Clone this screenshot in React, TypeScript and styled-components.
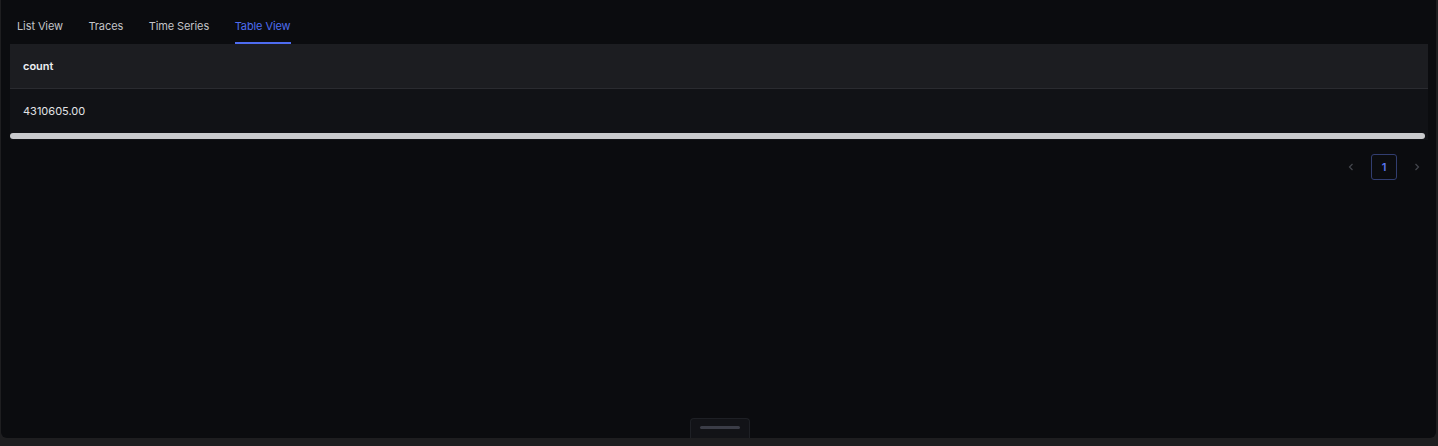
import React, { useState } from "react";
import styled, { createGlobalStyle } from "styled-components";

const GlobalStyle = createGlobalStyle`
  html, body {
    margin: 0;
    padding: 0;
    background: #1e1e20;
    font-family: Inter, "Noto Sans", "Liberation Sans", sans-serif;
  }
`;

const TABS = ["List View", "Traces", "Time Series", "Table View"];

const App = () => {
  const [active, setActive] = useState("Table View");

  return (
    <>
      <GlobalStyle />
      <Frame>
        <TabBar>
          {TABS.map((tab) => (
            <Tab
              key={tab}
              $active={tab === active}
              onClick={() => setActive(tab)}
            >
              {tab}
            </Tab>
          ))}
        </TabBar>
        <TableWrap>
          <Table>
            <thead>
              <tr>
                <HeadCell>count</HeadCell>
              </tr>
            </thead>
            <tbody>
              <tr>
                <BodyCell>4310605.00</BodyCell>
              </tr>
            </tbody>
          </Table>
          <ScrollTrack>
            <ScrollThumb />
          </ScrollTrack>
        </TableWrap>
        <Pagination>
          <PageArrow aria-label="previous">
            <svg width="10" height="10" viewBox="0 0 10 10">
              <path d="M6.5 2 L3.5 5 L6.5 8" fill="none" stroke="currentColor" strokeWidth="1.2" />
            </svg>
          </PageArrow>
          <PageItem $active>1</PageItem>
          <PageArrow aria-label="next">
            <svg width="10" height="10" viewBox="0 0 10 10">
              <path d="M3.5 2 L6.5 5 L3.5 8" fill="none" stroke="currentColor" strokeWidth="1.2" />
            </svg>
          </PageArrow>
        </Pagination>
        <Spacer />
        <HandleRow>
          <DragHandle>
            <HandleLine />
          </DragHandle>
        </HandleRow>
      </Frame>
    </>
  );
};

export default App;

const Frame = styled.div`
  box-sizing: border-box;
  margin-left: 1px;
  width: 1435px;
  height: 438px;
  background: #0b0c0f;
  border-radius: 0 0 6px 6px;
  display: flex;
  flex-direction: column;
  overflow: hidden;
`;

const TabBar = styled.div`
  display: flex;
  gap: 25.5px;
  padding: 0 16px;
  height: 44px;
  align-items: stretch;
`;

const Tab = styled.div<{ $active?: boolean }>`
  display: flex;
  align-items: center;
  padding-top: 10px;
  font-size: 11px;
  letter-spacing: -0.1px;
  color: ${(p) => (p.$active ? "#4e6cf0" : "#c3c4c8")};
  border-bottom: 2px solid ${(p) => (p.$active ? "#4e6cf0" : "transparent")};
  box-sizing: border-box;
  cursor: pointer;
`;

const TableWrap = styled.div`
  margin: 0 8px 0 9px;
  display: flex;
  flex-direction: column;
`;

const Table = styled.table`
  width: 100%;
  border-collapse: collapse;
`;

const HeadCell = styled.th`
  height: 44px;
  padding: 0 13px;
  text-align: left;
  font-size: 11px;
  font-weight: 600;
  color: #eceef2;
  background: #1c1d21;
  border-bottom: 1px solid #2a2b30;
`;

const BodyCell = styled.td`
  height: 42px;
  padding: 1px 13px 0;
  font-size: 11px;
  color: #e2e3e6;
  background: #111216;
`;

const ScrollTrack = styled.div`
  height: 8px;
  background: #111216;
  display: flex;
  align-items: center;
  padding-right: 3px;
`;

const ScrollThumb = styled.div`
  flex: 1;
  height: 6px;
  border-radius: 3px;
  background: #c9cacd;
`;

const Pagination = styled.div`
  display: flex;
  justify-content: flex-end;
  align-items: center;
  gap: 8px;
  padding: 14px 13px 0 0;
`;

const PageArrow = styled.div`
  width: 12px;
  height: 26px;
  display: flex;
  align-items: center;
  justify-content: center;
  color: #45474e;
`;

const PageItem = styled.div<{ $active?: boolean }>`
  width: 26px;
  height: 26px;
  box-sizing: border-box;
  display: flex;
  align-items: center;
  justify-content: center;
  border: 1px solid ${(p) => (p.$active ? "#323e70" : "transparent")};
  border-radius: 3px;
  font-size: 11px;
  font-weight: 600;
  color: #5a76f2;
  margin: 0 6px;
`;

const Spacer = styled.div`
  flex: 1;
`;

const HandleRow = styled.div`
  display: flex;
  justify-content: center;
`;

const DragHandle = styled.div`
  width: 60px;
  height: 20px;
  box-sizing: border-box;
  margin-left: 2px;
  background: #121317;
  border: 1px solid #1e2025;
  border-bottom: none;
  border-radius: 4px 4px 0 0;
  display: flex;
  justify-content: center;
  padding-top: 7px;
`;

const HandleLine = styled.div`
  width: 40px;
  height: 3px;
  border-radius: 2px;
  background: #3b3d47;
`;
